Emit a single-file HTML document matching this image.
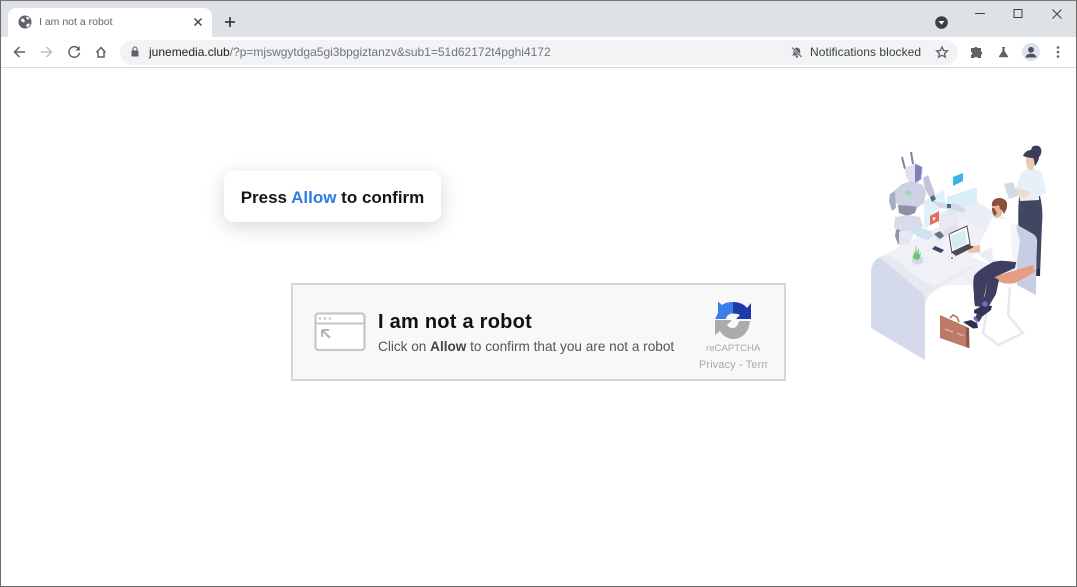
<!DOCTYPE html>
<html><head><meta charset="utf-8"><title>I am not a robot</title>
<style>
html,body{margin:0;padding:0;background:#fff}
body{width:1077px;height:587px;position:relative;overflow:hidden;font-family:"Liberation Sans",sans-serif}
.a{position:absolute;white-space:nowrap}
svg{position:absolute;left:0;top:0}
</style></head>
<body>
<!-- browser chrome -->
<div class="a" style="left:0;top:0;width:1077px;height:37px;background:#dee1e6"></div>
<div class="a" style="left:0;top:37px;width:1077px;height:31px;background:#fff"></div>
<div class="a" style="left:0;top:67px;width:1077px;height:1px;background:#dadce0"></div>
<div class="a" style="left:8px;top:8px;width:204px;height:29px;background:#fff;border-radius:8px 8px 0 0"></div>
<div class="a" style="left:120px;top:40px;width:838px;height:25px;background:#f1f3f4;border-radius:13px"></div>
<div class="a" style="left:39px;top:15px;font-size:10.500px;line-height:14px;color:#5f6368">I am not a robot</div>
<div class="a" style="left:149px;top:44px;font-size:12px;line-height:17px;color:#70757a"><span style="color:#202124">junemedia.club</span>/?p=mjswgytdga5gi3bpgiztanzv&amp;sub1=51d62172t4pghi4172</div>
<div class="a" style="left:810px;top:44px;font-size:12px;line-height:17px;color:#3c4043;letter-spacing:.05px">Notifications blocked</div>

<!-- captcha box -->
<div class="a" style="left:291px;top:283px;width:491px;height:94px;background:#f8f8f8;border:2px solid #d6d6d6"></div>

<svg width="1077" height="587" viewBox="0 0 1077 587" fill="none">
<!-- globe favicon -->
<circle cx="25" cy="22" r="6.500" fill="#5f6368"/>
<path d="M21.500 18.500l2.500.5 1 2.500-1.500 1-2.500-1.500zM26.500 24l2.500-.5 1 .8-2 3-1.500-.5zM26 16.800l2.500.5 1 2-2.500.2z" fill="#fff"/>
<!-- tab close / new tab -->
<path d="M194.500 18.500l7 7M201.500 18.500l-7 7" stroke="#3c4043" stroke-width="1.400"/>
<path d="M230 17v10M225 22h10" stroke="#3c4043" stroke-width="1.800"/>
<!-- nav -->
<path d="M25 52H15M19.500 47l-5 5 5 5" stroke="#5f6368" stroke-width="1.500"/>
<path d="M41 52h10M46.500 47l5 5-5 5" stroke="#bdc1c6" stroke-width="1.500"/>
<path d="M78.500 48.800a5.300 5.300 0 1 0 1 4" stroke="#5f6368" stroke-width="1.500"/>
<path d="M79.800 46v4.500h-4.500z" fill="#5f6368"/>
<path d="M96.500 52.500l4.500-5 4.500 5M98 51.500v5.500h6v-5.500" stroke="#5f6368" stroke-width="1.500"/>
<!-- lock -->
<rect x="131.500" y="50.500" width="7" height="6" rx=".8" fill="#5f6368"/>
<path d="M133 50.500v-1.500a2 2 0 0 1 4 0v1.500" stroke="#5f6368" stroke-width="1.100"/>
<!-- bell -->
<path d="M792 55.500h9.500l-1.300-1.800v-2.700a3.400 3.400 0 0 0-6.800 0v2.700z" fill="#5f6368"/>
<rect x="795.700" y="56" width="2.200" height="1.500" fill="#5f6368"/>
<path d="M792 47.500l9.500 9.500" stroke="#f1f3f4" stroke-width="2.200"/>
<path d="M792 47.500l9.500 9.500" stroke="#5f6368" stroke-width="1"/>
<!-- star -->
<path d="M942 47l1.600 3.500 3.800.4-2.800 2.500.8 3.700-3.400-1.900-3.400 1.900.8-3.700-2.800-2.500 3.800-.4z" stroke="#5f6368" stroke-width="1.300"/>
<!-- puzzle -->
<path d="M971 48h3.200a1.700 1.700 0 0 1 3.300 0h3.500v3.500a1.700 1.700 0 0 1 0 3.300V58h-3.300a1.700 1.700 0 0 0-3.300 0H971v-3a1.700 1.700 0 0 0 0-3.300z" fill="#5f6368"/>
<!-- flask -->
<path d="M1002 47h3v.8l-.4.300v3l3.400 5.200c.2.500 0 .9-.6.900h-7.800c-.6 0-.8-.4-.6-.9l3.400-5.200v-3l-.4-.3z" fill="#5f6368"/>
<!-- avatar -->
<circle cx="1031" cy="52" r="9" fill="#dfe3ea"/>
<circle cx="1031" cy="49.800" r="2.900" fill="#4a5260"/>
<path d="M1025.500 57.500c.5-2.800 3-3.700 5.500-3.700s5 .9 5.500 3.700z" fill="#4a5260"/>
<!-- menu -->
<circle cx="1058" cy="47.500" r="1.300" fill="#5f6368"/><circle cx="1058" cy="52" r="1.300" fill="#5f6368"/><circle cx="1058" cy="56.500" r="1.300" fill="#5f6368"/>
<!-- tab search -->
<circle cx="941.500" cy="22.500" r="6.300" fill="#3c4043"/>
<path d="M938.500 21h6l-3 3.600z" fill="#fff"/>
<!-- window controls -->
<path d="M975 13.500h10" stroke="#3c4043" stroke-width="1"/>
<rect x="1014" y="9.500" width="8" height="8" stroke="#3c4043" stroke-width="1"/>
<path d="M1052.500 9.500l9 9M1061.500 9.500l-9 9" stroke="#3c4043" stroke-width="1"/>

<!-- recaptcha logo -->
<path d="M715 319H726C726.500 315.500 729 313.500 733 313.500V302C728 302 725 303 722 305L718 301.500V313z" fill="#3b7eea"/>
<path d="M733 302C739 302 744 304 747 308L751 303V319H736L740 315C738.500 314 736 313.500 733 313.500z" fill="#1c3aa9"/>
<path d="M715 320V335L720 331C723 336 728 339 733 339C739 339 744 336 747 331C748.500 329 749 326 750 321H739C738 325 736 328 733 328C730 328 728.500 327 727 325L732 320z" fill="#ababab"/>

<!-- window icon in captcha -->
<rect x="315.500" y="313.500" width="49" height="36.500" rx="3" fill="#fff" stroke="#c6c6c6" stroke-width="2.200"/>
<path d="M316 323.500h48" stroke="#c6c6c6" stroke-width="2"/>
<circle cx="320" cy="318.500" r="1.200" fill="#c0c0c0"/><circle cx="325" cy="318.500" r="1.200" fill="#c0c0c0"/><circle cx="330" cy="318.500" r="1.200" fill="#c0c0c0"/>
<path d="M322 330v7M322 330h7M322 330l8 8" stroke="#b5b5b5" stroke-width="2"/>

<!-- illustration -->
<!-- woman's trousers, behind the desk wall -->
<path d="M1019 197l21-1c2 8 3 18 2 28l-2 52-4 0-2-34-15-5c-1-14-1-28 0-40z" fill="#434660"/>
<path d="M1036 269l4 0 0 7-4 0z" fill="#2f2e4e"/>
<!-- back wall of desk -->
<path d="M940 222l37-20 56 32c3 2 4 4 4 8l-1 30-30 5z" fill="#eceef5"/>
<path d="M1017 225l16 9c3 2 3.500 4 3.500 8l-.5 53-19-10z" fill="#c9cde3"/>
<!-- desk top -->
<path d="M880 257l42-22 60 26 22 12-27 12-22 0-18 2c-2 1-4 2-5 4l-7 7-3 2z" fill="#f0f1f6"/>
<path d="M922 235l35-18 38 20-26 22-8 8z" fill="#f0f1f6"/>
<!-- desk side panel -->
<path d="M871 273c0-7 3-13 9-16l42 36c2 2 3 4 3 7v60l-54-32z" fill="#d5d9ec"/>
<path d="M880 257l42 36c2 2 3 5 3 9 1-7 5-13 12-15l-14-5-33-27z" fill="#e6e8f2"/>
<path d="M925 300c1-6 5-11 11-14l36-21 3 1-38 23c-6 4-10 8-11 14z" fill="#e9eaf2"/>
<!-- stool -->
<path d="M993 277l-10 56 15 12 25-12-15-18 2-28" stroke="#e6e7f1" stroke-width="2.500"/>
<!-- seat -->
<path d="M993 277l40-12 2 7-20 11c-5 1-11 1-15-1z" fill="#e49c83"/>
<!-- briefcase -->
<path d="M940 315l27 12 1.500 21-28.500-10z" fill="#bd7a67"/>
<path d="M966 327l3 1 .5 20-3-1z" fill="#8c5546"/>
<path d="M950 318l3-3 4 2 2 5" stroke="#a5695a" stroke-width="1.500"/>
<path d="M945 329l8 3M957 333l7 3" stroke="#d9ac9f" stroke-width="1.500"/>
<!-- man legs -->
<path d="M993 262l24-4-2 10-20 9-8 6-3 14-2 10-7-1c-1-4-1-8-1-12-1-7-1-12 0-18 4-6 12-10 19-14z" fill="#3f3e60"/>
<path d="M994 277l5 3-3 14-7 12-10 16-5-2 7-15 4-10 2-12z" fill="#3f3e60"/>
<path d="M974 310l10-5 8 1-1 4-8 6-9-3z" fill="#333355"/><circle cx="985" cy="304" r="2.800" fill="#6b6bd0"/>
<path d="M963 322l8-2 6 3 1 5-5 .5z" fill="#2f2e4e"/><path d="M974 317l4 5" stroke="#6b6bd0" stroke-width="2.500"/>
<!-- shirt -->
<path d="M992 218l21 2 7 20-3 22-24-2-1-13-12 6v-10l8-16z" fill="#fff"/>
<path d="M1012 222l8 18-3 22-4 0c-2-12-2-28-1-40z" fill="#f3f4f8"/>
<path d="M967 247l13-2v7l-11 1z" fill="#eebfa9"/>
<!-- head -->
<path d="M992 205l7-1 4 6-2 6-5 2-3-4c0-3-1-6-1-9z" fill="#e4b398"/>
<path d="M992 206c-1-5 3-8 7-8 5 0 9 3 8 8 0 3-2 6-3 8l-2-4-2-1-1-4c-3 1-5 1-7 1z" fill="#8b4f37"/>
<path d="M992 208c0 4 1 7 3 8l2-3-3-5z" fill="#8b4f37"/>
<!-- laptop -->
<path d="M949 234l18-8 3 18-18 9z" fill="#fff" stroke="#4f5158" stroke-width="1"/>
<path d="M951 236l14-6 2 13-14 7z" fill="#d5ebf0"/>
<path d="M951 252l5 4 18-9-6-3z" fill="#4a4c55"/>
<!-- phone, mug -->
<path d="M932 249l3-3 9 4-3 3z" fill="#40406e"/>
<ellipse cx="952" cy="258" rx="3.500" ry="2.200" fill="#fff" stroke="#e0e0e6"/>
<circle cx="952" cy="258" r=".9" fill="#333"/>
<!-- plant -->
<path d="M912 256l0 6 5 3 6-2 0-6z" fill="#d6d8e6"/>
<path d="M913 258l1-7 1 4 1-11 1 10 2-7 0 8 2-3-1 6-3 2z" fill="#67c66e"/>
<!-- robot laptop -->
<path d="M937 215l20-10 2 17-18 12z" fill="#e8e9f2"/>
<path d="M933 235l5 6 20-13-1-5-16 10z" fill="#dfe1ec"/>
<path d="M934 234l6 5 4-3-4-5z" fill="#6d7080"/>
<!-- holo panels -->
<path d="M924 201l20-11 1 14-10 7-1 12-10 6z" fill="#d9edf6" opacity=".85"/>
<path d="M947 197l30-10 0 15-30 16z" fill="#d3ebf5" opacity=".85"/>
<path d="M953 177l10-4v8l-10 5z" fill="#39b4e5"/>
<path d="M930 216l9-5v10l-9 4z" fill="#e16c62"/>
<path d="M933 217l3 1-3 3z" fill="#fff"/>
<!-- robot -->
<path d="M902 157l3 12M911 152l2 12" stroke="#7d83a8" stroke-width="2"/>
<path d="M905 168l11-5 7 4-1 12-7 7-6-5c-3-3-4-8-4-13z" fill="#dfe1ef"/>
<path d="M915 164l7 3-1 12-6 4z" fill="#7f7fbd"/>
<path d="M893 192l9-8 9-3 12 4 3 8-2 10-10 7-13-1-7-9z" fill="#ced1e4"/>
<path d="M906 190l6 2-2 4-5-2z" fill="#a4d6b8"/>
<path d="M898 205l14 1 5 1-2 6-8 3-8-3z" fill="#8e92a8"/>
<path d="M890 194l5-3 1 17-4 3-3-10z" fill="#a9adc3"/>
<path d="M923 178l5-3 7 19-4 5-6-10z" fill="#c1c4da"/>
<path d="M931 197l6 5 12 2 8 0 9 6-4 3-7-3-15-2-8-7z" fill="#d4d7e8"/>
<path d="M930 197l4-2 2 4-4 3zM947 204l4 0 0 4-4 0z" fill="#4b6d86"/>
<path d="M895 217l14-2 11 2 3 9-4 5-9 5-11-1-5-8z" fill="#d9dbea"/>
<path d="M896 230l3-1 3 9-1 7-3-1-3-8z" fill="#8f93ab"/>
<path d="M899 232l12-2 2 6-4 7-10 3z" fill="#e4e6f1"/>
<path d="M911 225l10 3 10 3 2 5-5 4-12-4z" fill="#cfe2ee"/>
<!-- woman upper -->
<path d="M1025 170l9-2 8 5 4 20-4 2-3 1 0 4-19 1-1-8-3-3 3-11 3-7z" fill="#e7f0f8"/>
<path d="M1017 188l-3 2 2 5 9 3 5-4-1-3z" fill="#eedbd0"/>
<path d="M1004 184l9-2 5 14-9 3z" fill="#d1dbe4"/>
<path d="M1026 156l8-1 1 9-3 7-4-2-2-6z" fill="#edc8b3"/>
<path d="M1023 156c1-3 4-6 8-6l1-3c3-2 8-2 9 2 1 3 0 6-2 8 0 3-2 6-4 9-1-3 0-5-2-8-3 0-7-1-10-2z" fill="#3e3c5c"/>
</svg>

<!-- press allow bubble -->
<div class="a" style="left:224px;top:171px;width:217px;height:51px;background:#fff;border-radius:10px;box-shadow:0 5px 20px rgba(0,0,0,.16);text-align:center;font-weight:bold;font-size:17px;line-height:53px;color:#141414">Press <span style="color:#2a7de1">Allow</span> to confirm</div>

<!-- captcha text -->
<div class="a" style="left:378px;top:309px;font-size:20px;line-height:27px;font-weight:bold;color:#111;letter-spacing:.25px">I am not a robot</div>
<div class="a" style="left:378px;top:338px;font-size:13.600px;line-height:18px;color:#555">Click on <b style="color:#444">Allow</b> to confirm that you are not a robot</div>
<div class="a" style="left:706px;top:342px;font-size:9.600px;line-height:14px;color:#a8a8a8">reCAPTCHA</div>
<div class="a" style="left:699px;top:358px;width:69px;overflow:hidden;font-size:10.800px;line-height:14px;color:#a8a8a8;letter-spacing:.2px">Privacy - Terms</div>

<!-- window frame -->
<div class="a" style="left:0;top:0;width:1075px;height:585px;border:1px solid #6a6a6a;border-top-color:#777"></div>
</body></html>
